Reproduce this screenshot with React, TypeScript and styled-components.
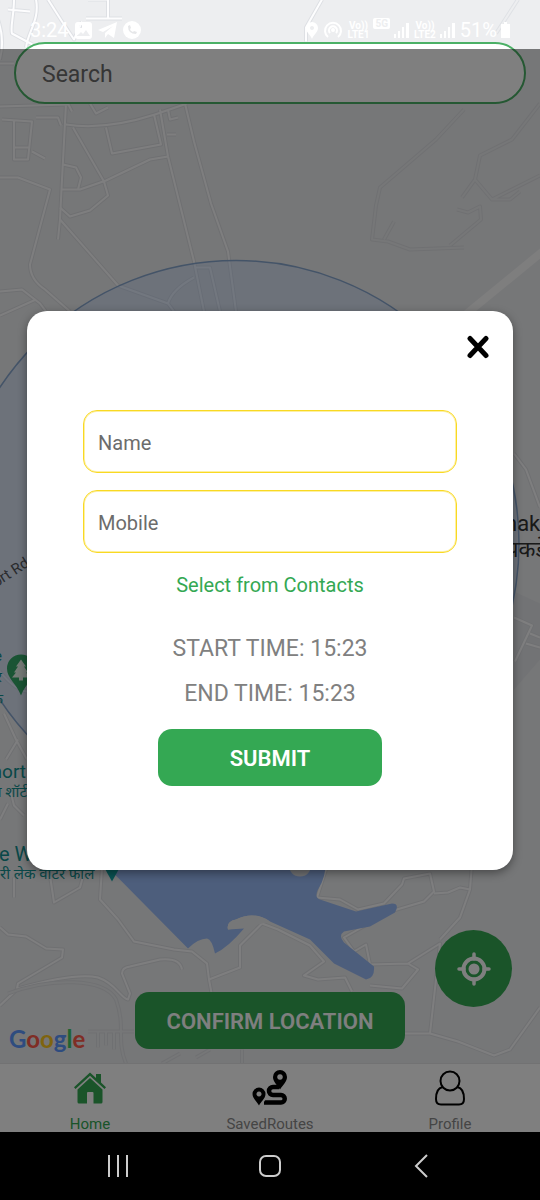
import React, { useState } from 'react';
import styled, { createGlobalStyle } from 'styled-components';

const GlobalStyle = createGlobalStyle`
  * { box-sizing: border-box; }
  body { margin: 0; background: #000; font-family: Roboto, "Noto Sans", sans-serif; }
  button, input { font-family: inherit; }
`;

const Phone = styled.div`
  display: flex;
  flex-direction: column;
  min-height: 100vh;
`;

const AppArea = styled.div`
  position: relative;
  flex: 1;
  display: flex;
  flex-direction: column;
  background: #edeef0;
`;

const MapArea = styled.main`
  position: relative;
  flex: 1;
  display: flex;
  flex-direction: column;
  justify-content: space-between;
  overflow: hidden;
`;

const MapCanvas = styled.svg`
  position: absolute;
  inset: 0;
  width: 100%;
  height: 100%;
`;

const TopBlock = styled.div`
  position: relative;
  padding: 0 14px;
`;

const StatusBar = styled.div`
  display: flex;
  justify-content: space-between;
  align-items: flex-end;
  height: 42px;
  padding: 0 16px;
  color: #fff;
  font-size: 20px;
  line-height: 24px;
`;

const StatusGroup = styled.div<{ $gap: number }>`
  display: flex;
  align-items: center;
  gap: ${p => p.$gap}px;
`;

const Carrier = styled.span`
  display: flex;
  flex-direction: column;
  align-items: center;
  font-size: 10px;
  line-height: 9px;
  font-weight: 700;
`;

const NetBadge = styled.span`
  align-self: flex-start;
  padding: 0 2px;
  border-radius: 2px;
  background: #fff;
  color: #edeef0;
  font-size: 10px;
  line-height: 11px;
  font-weight: 700;
`;

const SearchInput = styled.input`
  display: block;
  width: 100%;
  height: 62px;
  padding: 2px 26px 0;
  border: 2px solid #4bb066;
  border-radius: 31px;
  background: #fff;
  color: #444;
  font-size: 23px;
  outline: none;
  &::placeholder { color: #6c6c6c; opacity: 1; }
`;

const MapFooter = styled.div`
  position: relative;
  display: grid;
  grid-template-columns: 1fr 2fr 1fr;
  height: 133px;
  padding-bottom: 14px;
`;

const GoogleMark = styled.div`
  align-self: end;
  padding-left: 9px;
  font-family: Lato, sans-serif;
  font-size: 24px;
  line-height: 20px;
  font-weight: 700;
`;

const Letter = styled.span<{ $color: string }>`
  color: ${p => p.$color};
`;

const GreenButton = styled.button`
  height: 57px;
  padding: 2px 0 0;
  border: 0;
  border-radius: 14px;
  background: #34a853;
  color: #fff;
  font-size: 22px;
  font-weight: 600;
  white-space: nowrap;
`;

const ConfirmButton = styled(GreenButton)`
  align-self: end;
`;

const LocateButton = styled.button`
  display: grid;
  place-items: center;
  justify-self: end;
  width: 77px;
  height: 77px;
  margin-right: 28px;
  padding: 0;
  border: 0;
  border-radius: 50%;
  background: #34a853;
`;

const TabBar = styled.nav`
  display: grid;
  grid-template-columns: repeat(3, 1fr);
  height: 69px;
  background: #fff;
  border-top: 1px solid #e4e5e7;
`;

const Tab = styled.a<{ $active?: boolean }>`
  display: flex;
  flex-direction: column;
  align-items: center;
  justify-content: space-between;
  padding-top: 6px;
  color: ${p => (p.$active ? '#34a853' : '#8a8a8a')};
  font-size: 15px;
  line-height: 16px;
  text-decoration: none;
`;

const Backdrop = styled.div`
  position: absolute;
  inset: 49px 0 0;
  display: flex;
  align-items: center;
  justify-content: center;
  background: rgba(0, 0, 0, 0.5);
`;

const Dialog = styled.form`
  display: flex;
  flex-direction: column;
  align-items: center;
  width: 90%;
  padding: 16px 56px 84px;
  border-radius: 20px;
  background: #fff;
  box-shadow: 0 3px 10px rgba(0, 0, 0, 0.4);
`;

const CloseRow = styled.div`
  display: flex;
  align-self: stretch;
  justify-content: flex-end;
  margin: 0 -41px 43px 0;
`;

const CloseButton = styled.button`
  display: grid;
  place-items: center;
  width: 40px;
  height: 40px;
  padding: 0;
  border: 0;
  background: none;
`;

const Field = styled.input`
  width: 100%;
  height: 63px;
  margin-bottom: 17px;
  padding: 2px 14px 0;
  border: 1px solid #f9d923;
  border-radius: 14px;
  background: #fff;
  color: #333;
  font-size: 20px;
  outline: none;
  box-shadow: inset 0 0 0 1px #fdf0a4;
  &::placeholder { color: #6c6c6c; opacity: 1; }
`;

const ContactsButton = styled.button`
  padding: 0;
  border: 0;
  background: none;
  color: #34a853;
  font-size: 20px;
  line-height: 30px;
`;

const Times = styled.div`
  display: grid;
  gap: 15px;
  margin: 34px 0 20px;
  color: #808080;
  font-size: 23px;
  line-height: 30px;
  text-align: center;
`;

const SubmitButton = styled(GreenButton)`
  width: 60%;
`;

const SystemNav = styled.footer`
  display: grid;
  grid-template-columns: repeat(3, 1fr);
  place-items: center;
  height: 68px;
  padding: 0 42px;
  background: #000;
`;

const SystemButton = styled.button`
  display: grid;
  place-items: center;
  width: 48px;
  height: 48px;
  padding: 0;
  border: 0;
  background: none;
`;

const roads = [
  'M-2 20 Q5 40 0 60 M14 0 C14 16 10 28 12 34 L38 48 M36 0 C40 20 28 32 26 48 M8 10 L30 12 M48 0 L62 22 L74 40 L82 22 M88 0 H108 V18 M86 19 H122 M322 0 L306 28 V42',
  'M0 64 H14 M66 104 L62 180 L60 220 L58 240 M0 107 L68 105 M14 120 V160 H28 L32 122 L2 120 M14 148 H30 M32 152 L45 159 M36 118 L58 118 L61 126',
  'M66 125 Q105 131 155 115 L187 104 M106 128 L112 154 L161 145 L154 115 M73 128 L104 182 L108 196 L90 211 L70 217 L60 208 M63 165 L76 168 L81 178 L78 190 M61 190 H80 L106 181 L150 160 L168 157 M160 110 L168 157 L194 262 L204 312 M185 104 L194 142 L211 204 L228 252 L236 312 M167 135 H176 M168 110 L170 120 L178 118',
  'M0 178 L18 178 L50 190 L30 265 Q30 280 45 290 L70 312 M60 220 L118 286 L168 304 L174 312 M0 292 L22 290 L40 304 L46 312 M0 316 L36 300 M196 268 L210 268 L220 312 M194 278 Q172 290 168 304',
  'M90 104 L96 114 L108 108 M68 104 L72 112',
  'M0 672 Q14 690 27 692 M4 714 L16 740 L27 760 M6 760 L18 740 M10 790 L14 806 L24 816 M0 820 L8 804',
  'M0 928 L8 935 L26 937 L46 949 L63 950 L62 958 L18 984 L17 989 M0 1006 L18 989 C50 980 80 974 98 978 C116 984 120 998 128 1000 L130 994 L122 974 Q122 968 130 967 L160 960 Q180 958 182 970 M102 868 L100 900 L118 920 L134 942 L174 950 L192 952 L207 964 L209 980 L212 996 M209 980 L240 968 V946 L262 924 L278 930 L310 946 L324 962 L304 976 L318 980 L345 978 L352 992 M50 876 L54 903 L80 888 L86 866 M14 878 L14 898',
  'M326 870 L317 898 L340 900 L358 910 L384 904 L402 885 L404 879 L430 874 L434 892 L424 902 L390 912 L344 938 L354 952 L366 945 L370 965 L408 964 L440 944 L436 980 L430 1034 L458 1042 L494 1056 L510 1050 L540 1008 M408 964 L418 970 L402 989 L370 986 M434 894 L448 893 L460 888 L470 890 L472 864 M470 890 L460 918 L440 940 M405 1034 H430',
  'M514 454 L526 470 L540 508 M514 618 L532 626 L515 662 M530 634 L540 638 M526 644 L540 648',
];

const faintRoads =
  'M464 110 L436 140 L380 188 L376 206 L372 240 L388 242 L410 250 L464 248 M384 240 L394 222 M540 104 L512 140 L480 156 L475 180 L462 198 M475 180 L492 200 L540 176 M457 210 L468 213 L480 207 L481 220 L450 246 M492 200 L510 200 L520 192 M518 0 L496 34 M8 994 C50 978 104 978 116 1000 C126 1028 116 1040 126 1064 M88 1032 H134 M98 1032 V1048 M106 1032 V1046 M114 1032 V1050 M162 1064 L180 1054 M196 1058 L210 1050 M242 1050 V1064';

const MapDrawing = () => (
  <MapCanvas viewBox="0 0 540 1064" preserveAspectRatio="xMidYMid slice" aria-hidden="true">
    <rect width="540" height="1064" fill="#edeef0" />
    <path d="M540 604 L514 592 V690 L540 660Z" fill="#e4e6eb" />
    <path d="M462 318 L545 250" stroke="#fcfcfd" strokeWidth="8" fill="none" />
    <g fill="none" strokeLinejoin="round">
      {roads.map(d => <path key={d} d={d} stroke="#dee0e4" strokeWidth="4" />)}
      {roads.map(d => <path key={d} d={d} stroke="#fdfdfe" strokeWidth="2" />)}
      <path d={faintRoads} stroke="#dfe1e5" strokeWidth="4" />
      <path d={faintRoads} stroke="#edeef0" strokeWidth="2" />
    </g>
    <path
      d="M104 864 L188 949 Q198 939 207 939 Q212 940 215 954 Q228 948 244 929 L228 930 Q226 922 236 920 Q254 911 270 922 L310 940 L334 964 L366 980 Q375 979 374 967 L344 943 Q338 936 344 932 L370 927 L395 913 Q400 904 392 904 L356 912 L320 900 Q314 898 318 890 Q326 878 326 860Z"
      fill="#9bbdf8"
    />
    <path d="M228 930 Q226 922 236 920 Q254 911 270 922 L262 924 L244 928Z" fill="#edeef0" />
    <path d="M288 864 Q290 877 300 877 Q310 877 312 864Z" fill="#e2e4e8" />
    <circle cx="236" cy="544" r="283" fill="#b3d1ff" fillOpacity="0.32" stroke="#88a8d0" strokeWidth="1.5" />
    <path d="M21 655 a14 14 0 0 1 14 14 c0 10-9 14-14 27 c-5-13-14-17-14-27 a14 14 0 0 1 14-14z" fill="#34a868" />
    <path d="M21 660 l5 7h-2l4 6h-2l4 5h-7v3h-4v-3h-7l4-5h-2l4-6h-2z" fill="#e8f5ec" />
    <path d="M102 864 H122 L112 882Z" fill="#12a5a5" />
    <g fontFamily='Roboto, "Noto Sans", sans-serif' fill="#129090">
      <text x="26" y="778" fontSize="19" textAnchor="end">hort</text>
      <text x="27" y="797" fontSize="15" textAnchor="end">न शॉर्ट</text>
      <text x="-1" y="861" fontSize="20">e W</text>
      <text x="0" y="879" fontSize="15">री लेक वाटर फॉल</text>
      <text x="2" y="661" fontSize="15" textAnchor="end">e</text>
      <text x="2" y="682" fontSize="15" textAnchor="end">र</text>
      <text x="3" y="704" fontSize="15" textAnchor="end">क</text>
    </g>
    <g fontFamily='Roboto, "Noto Sans", sans-serif' fill="#55585d">
      <text x="30" y="566" fontSize="15" textAnchor="end" transform="rotate(-33 30 566)">port Rd</text>
      <text x="505" y="531" fontSize="22" fill="#333">nak</text>
      <text x="506" y="557" fontSize="22" fill="#333">पकडे</text>
    </g>
  </MapCanvas>
);

const SignalIcon = () => (
  <svg width="16" height="16" viewBox="0 0 16 16" fill="#fff">
    <path d="M0 12h2v4H0zM4 9h2v7H4zM8 5h2v11H8zM12 1h3v15h-3z" />
  </svg>
);

const HomeIcon = () => (
  <svg width="34" height="36" viewBox="0 0 34 36" fill="currentColor">
    <path d="M17 2.500 L23 8 V4 H28 V12.500 L33 17.200 L31.500 19 L17 5.800 L2.500 19 L1 17.200Z" />
    <path d="M17 8 L29.500 19.500 V32 Q29.500 33.500 28 33.500 H20.500 V23 Q20.500 22 19.500 22 H15 Q14 22 14 23 V33.500 H6 Q4.500 33.500 4.500 32 V19.500Z" />
  </svg>
);

const RoutesIcon = () => (
  <svg width="36" height="36" viewBox="0 0 36 36">
    <path d="M27 17 H21 a4 4 0 0 0 0 8 H29 a3.500 3.500 0 0 1 0 7.500 H12" fill="none" stroke="#000" strokeWidth="4.500" />
    <path d="M14 24 L15 27 L9.500 36 H7.500Z" fill="#fff" />
    <path fillRule="evenodd" d="M28 0 a7 7 0 0 1 7 7 c0 4.500-4 8-7 12.500 c-3-4.500-7-8-7-12.500 a7 7 0 0 1 7-7z M28 4.200 a2.800 2.800 0 1 0 .01 0z" />
    <path fillRule="evenodd" d="M7 17.500 a6.500 6.500 0 0 1 6.500 6.500 c0 4.500-4.500 7.500-6.500 11.500 c-2-4-6.500-7-6.500-11.500 a6.500 6.500 0 0 1 6.500-6.500z M7 21.500 a2.500 2.500 0 1 0 .01 0z" />
  </svg>
);

const ProfileIcon = () => (
  <svg width="32" height="36" viewBox="0 0 32 36" fill="none" stroke="#000" strokeWidth="2">
    <circle cx="16" cy="11" r="9.500" />
    <path d="M8.500 17 C4 18 2 23 2 29 Q2 34.500 7 34.500 H25 Q30 34.500 30 29 C30 23 28 18 23.500 17" />
  </svg>
);

export default function App() {
  const [open, setOpen] = useState(true);
  return (
    <Phone>
      <GlobalStyle />
      <AppArea>
        <MapArea>
          <MapDrawing />
          <TopBlock>
            <StatusBar>
              <StatusGroup $gap={6}>
                <span>3:24</span>
                <svg width="17" height="17" viewBox="0 0 17 17">
                  <path fill="#fff" fillRule="evenodd" d="M3 0h11a3 3 0 0 1 3 3v11a3 3 0 0 1-3 3H3a3 3 0 0 1-3-3V3a3 3 0 0 1 3-3z M2 14h13l-4-6-3 4-2-2z M4 3v3h3V3z" />
                </svg>
                <svg width="19" height="17" viewBox="0 0 19 17" fill="#fff">
                  <path d="M19 0 L16 16 L10 12 L7 16 V11 L15 4 L5 10 L0 8Z" />
                </svg>
                <svg width="18" height="18" viewBox="0 0 18 18">
                  <circle cx="9" cy="9" r="9" fill="#fff" />
                  <path d="M5 5 q0 8 8 8 l1-2-3-1-1 1 q-3-1-3-3 l1-1-1-3z" fill="#e6e7e9" />
                </svg>
              </StatusGroup>
              <StatusGroup $gap={4}>
                <svg width="12" height="17" viewBox="0 0 12 17">
                  <path fill="#fff" fillRule="evenodd" d="M6 0a6 6 0 0 1 6 6c0 4-4 6-6 11C4 12 0 10 0 6a6 6 0 0 1 6-6z M6 4a2 2 0 1 0 .01 0z" />
                </svg>
                <svg width="22" height="18" viewBox="0 0 22 18" fill="none" stroke="#fff" strokeWidth="2">
                  <path d="M6 16 a8 8 0 1 1 10 0 M8 12 a4 4 0 1 1 6 0" />
                  <circle cx="11" cy="9" r="1" />
                </svg>
                <Carrier><span>Vo))</span><span>LTE1</span></Carrier>
                <NetBadge>5G</NetBadge>
                <SignalIcon />
                <Carrier><span>Vo))</span><span>LTE2</span></Carrier>
                <SignalIcon />
                <span>51%</span>
                <svg width="9" height="16" viewBox="0 0 9 16" fill="#fff">
                  <path d="M3 0h3v2h3v14H0V2h3z" />
                </svg>
              </StatusGroup>
            </StatusBar>
            <SearchInput type="text" placeholder="Search" aria-label="Search" />
          </TopBlock>
          <MapFooter>
            <GoogleMark aria-label="Google">
              <Letter $color="#5c98ff">G</Letter>
              <Letter $color="#ff5a4a">o</Letter>
              <Letter $color="#ffc81e">o</Letter>
              <Letter $color="#5c98ff">g</Letter>
              <Letter $color="#3cc864">l</Letter>
              <Letter $color="#ff5a4a">e</Letter>
            </GoogleMark>
            <ConfirmButton type="button">CONFIRM LOCATION</ConfirmButton>
            <LocateButton type="button" aria-label="My location">
              <svg width="36" height="36" viewBox="0 0 36 36" fill="none" stroke="#fff">
                <circle cx="18" cy="18" r="10.500" strokeWidth="4" />
                <circle cx="18" cy="18" r="5.500" fill="#fff" stroke="none" />
                <path d="M18 3v5 M18 28v5 M3 18h5 M28 18h5" strokeWidth="3.500" strokeLinecap="round" />
              </svg>
            </LocateButton>
          </MapFooter>
        </MapArea>
        <TabBar>
          <Tab href="#home" $active><HomeIcon />Home</Tab>
          <Tab href="#routes"><RoutesIcon />SavedRoutes</Tab>
          <Tab href="#profile"><ProfileIcon />Profile</Tab>
        </TabBar>
        {open && (
          <Backdrop>
            <Dialog role="dialog" aria-label="Contact details" onSubmit={e => e.preventDefault()}>
              <CloseRow>
                <CloseButton type="button" aria-label="Close" onClick={() => setOpen(false)}>
                  <svg width="22" height="24" viewBox="0 0 22 24" stroke="#000" strokeWidth="5" strokeLinecap="round">
                    <path d="M3 3.500 L19 20.500 M19 3.500 L3 20.500" />
                  </svg>
                </CloseButton>
              </CloseRow>
              <Field type="text" placeholder="Name" aria-label="Name" />
              <Field type="tel" placeholder="Mobile" aria-label="Mobile" />
              <ContactsButton type="button">Select from Contacts</ContactsButton>
              <Times>
                <span>START TIME: 15:23</span>
                <span>END TIME: 15:23</span>
              </Times>
              <SubmitButton type="submit">SUBMIT</SubmitButton>
            </Dialog>
          </Backdrop>
        )}
      </AppArea>
      <SystemNav>
        <SystemButton type="button" aria-label="Recent apps">
          <svg width="22" height="22" viewBox="0 0 22 22" stroke="#ccc" strokeWidth="2"><path d="M2 0v22M11 0v22M20 0v22" /></svg>
        </SystemButton>
        <SystemButton type="button" aria-label="Home">
          <svg width="24" height="24" viewBox="0 0 24 24" fill="none" stroke="#ccc" strokeWidth="2"><rect x="2" y="2" width="20" height="20" rx="6" /></svg>
        </SystemButton>
        <SystemButton type="button" aria-label="Back">
          <svg width="24" height="24" viewBox="0 0 24 24" fill="none" stroke="#ccc" strokeWidth="2"><path d="M17 1 L6 12 L17 23" /></svg>
        </SystemButton>
      </SystemNav>
    </Phone>
  );
}
